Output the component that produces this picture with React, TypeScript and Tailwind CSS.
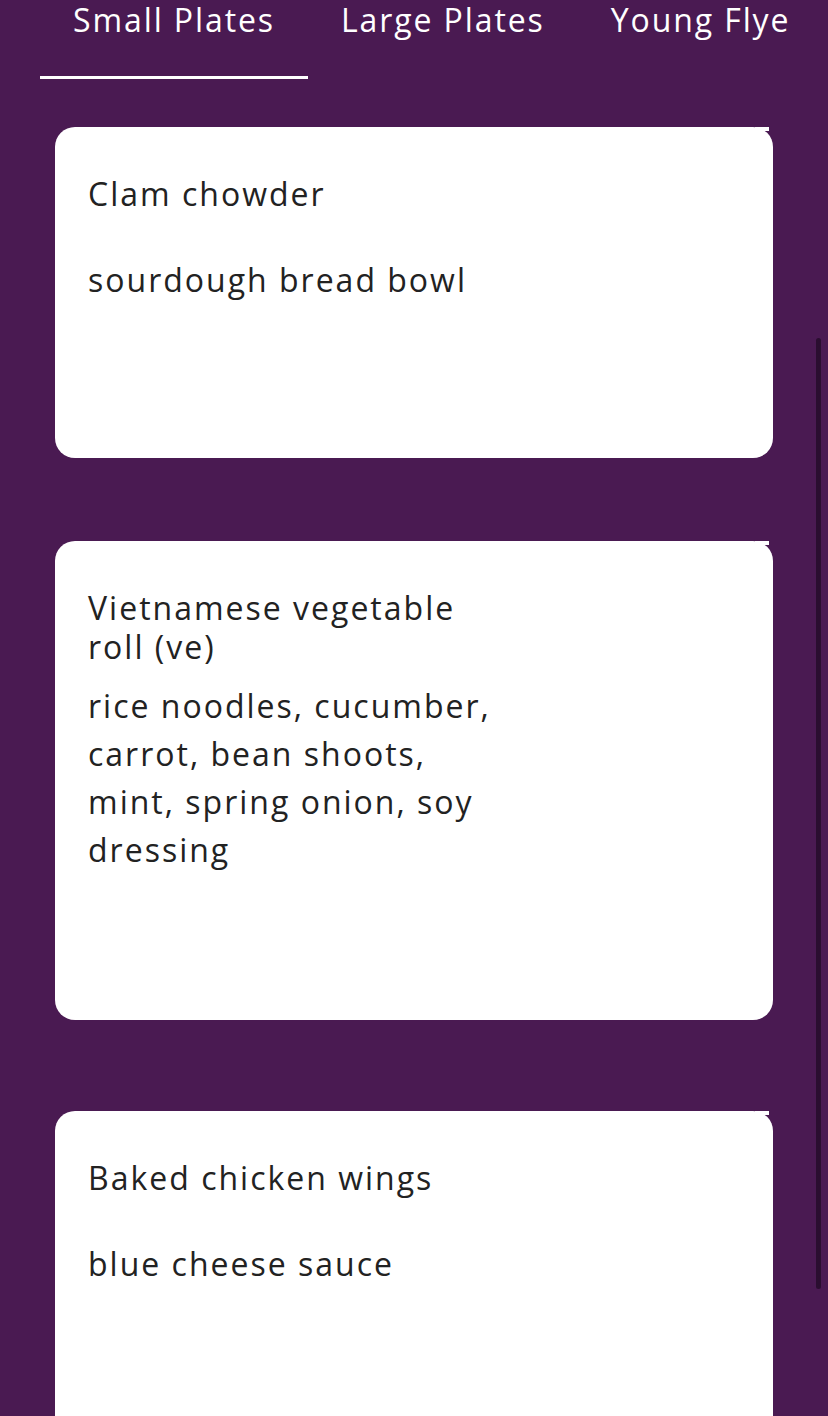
import React from "react";

const cards = [
  {
    title: "Clam chowder",
    desc: "sourdough bread bowl",
    cls: "mt-[48px] h-[331px]",
    titleCls: "min-h-[66px]",
  },
  {
    title: "Vietnamese vegetable roll (ve)",
    desc: "rice noodles, cucumber, carrot, bean shoots, mint, spring onion, soy dressing",
    cls: "mt-[83px] h-[479px]",
    titleCls: "min-h-[66px]",
  },
  {
    title: "Baked chicken wings",
    desc: "blue cheese sauce",
    cls: "mt-[91px] h-[331px]",
    titleCls: "min-h-[66px]",
  },
];

const tabs = ["Small Plates", "Large Plates", "Young Flyers"];

export default function App() {
  return (
    <div className="relative h-[1416px] w-[828px] overflow-hidden bg-[#4a1a52] font-['Open_Sans',sans-serif]">
      <div className="w-[788px] overflow-hidden">
        <div className="flex whitespace-nowrap pl-[40px]">
          {tabs.map((t, i) => (
            <div
              key={t}
              className={
                i === 0
                  ? "h-[79px] shrink-0 border-b-[3px] border-white px-[33px] text-[32px] leading-[40px] tracking-[1.9px] text-white"
                  : "h-[79px] shrink-0 px-[33px] text-[32px] leading-[40px] tracking-[1.9px] text-white"
              }
            >
              {t}
            </div>
          ))}
        </div>
      </div>
      <div className="flex flex-col px-[55px]">
        {cards.map((c) => (
          <div
            key={c.title}
            className={"relative shrink-0 rounded-[20px] bg-white pl-[33px] pt-[47px] " + c.cls}
          >
            <div className="absolute right-[4px] top-0 h-[4px] w-[14px] bg-white" />
            <div className="w-[410px] text-[#222] tracking-[2px]">
              <div className={"text-[32px] leading-[39px] " + c.titleCls}>{c.title}</div>
              <div className="mt-[16px] text-[32px] leading-[48px]">{c.desc}</div>
            </div>
          </div>
        ))}
      </div>
      <div className="absolute left-[816px] top-[338px] h-[951px] w-[5px] rounded-full bg-[#2a0e30]" />
    </div>
  );
}
